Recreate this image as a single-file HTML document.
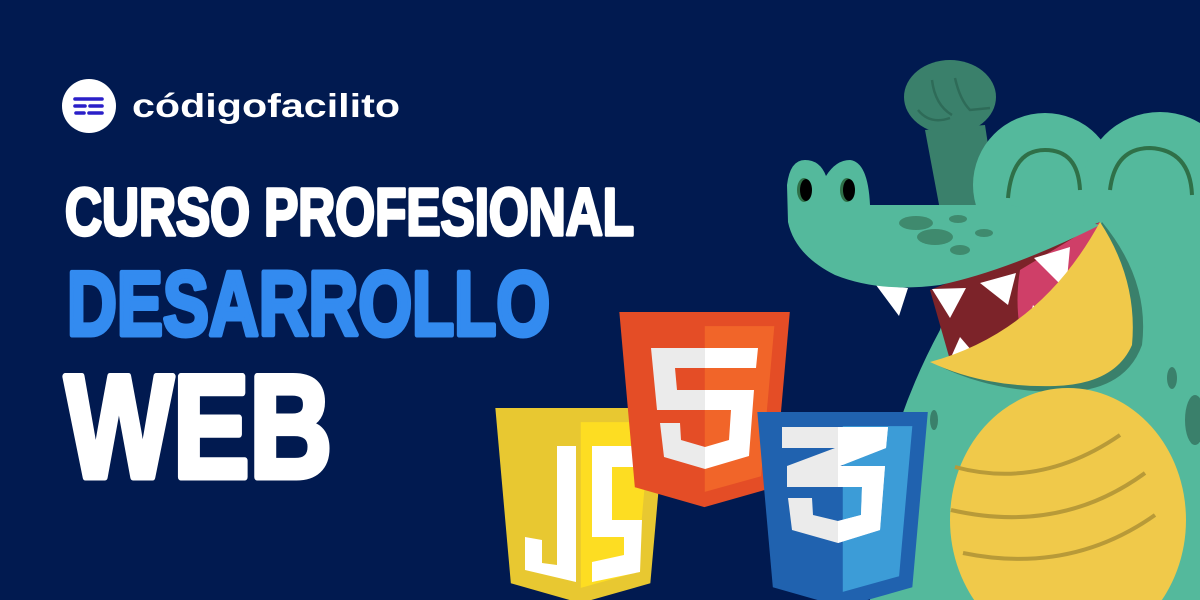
<!DOCTYPE html>
<html><head><meta charset="utf-8"><style>
html,body{margin:0;padding:0;background:#001a4f;overflow:hidden;width:1200px;height:600px}
svg{display:block}
</style></head><body>
<svg width="1200" height="600" viewBox="0 0 1200 600" xmlns="http://www.w3.org/2000/svg">
<defs>
<clipPath id="r3"><rect x="838" y="400" width="100" height="200"/></clipPath>
</defs>
<rect width="1200" height="600" fill="#011a50"/>
<!-- logo -->
<circle cx="89" cy="106" r="27" fill="#fff"/>
<g stroke="#2a1fc8" stroke-width="3.6" stroke-linecap="round">
<line x1="75" y1="99" x2="102" y2="99"/>
<line x1="75" y1="106" x2="85" y2="106"/><line x1="90" y1="106" x2="102" y2="106"/>
<line x1="76" y1="113" x2="84" y2="113"/><line x1="89" y1="113" x2="102" y2="113"/>
</g>
<text x="132" y="117" font-family="Liberation Sans, sans-serif" font-weight="bold" font-size="33" fill="#fff" textLength="268" lengthAdjust="spacingAndGlyphs">códigofacilito</text>
<!-- headings -->
<text x="65" y="235" font-family="Liberation Sans, sans-serif" font-weight="bold" font-size="67" fill="#fff" stroke="#fff" stroke-width="3.5" stroke-linejoin="round" textLength="569" lengthAdjust="spacingAndGlyphs">CURSO PROFESIONAL</text>
<text x="67" y="335" font-family="Liberation Sans, sans-serif" font-weight="bold" font-size="91" fill="#338bf0" stroke="#338bf0" stroke-width="5" stroke-linejoin="round" textLength="483" lengthAdjust="spacingAndGlyphs">DESARROLLO</text>
<text x="65" y="477" font-family="Liberation Sans, sans-serif" font-weight="bold" font-size="146" fill="#fff" stroke="#fff" stroke-width="7" stroke-linejoin="round" textLength="267" lengthAdjust="spacingAndGlyphs">WEB</text>

<!-- croc arm -->
<path d="M925,130 L985,125 L998,210 L940,210 Z" fill="#3a806b"/>
<ellipse cx="950" cy="97" rx="46" ry="37" fill="#3a806b"/>
<g fill="none" stroke="#2e6b58" stroke-width="2.5">
<path d="M918,110 Q930,125 950,118"/><path d="M932,80 Q935,105 952,115"/><path d="M955,78 Q960,100 970,110 L990,108"/>
</g>
<!-- body -->
<path d="M990,160 L1200,150 L1200,600 L870,600 Q870,460 940,330 Z" fill="#54b99c"/>
<circle cx="1045" cy="185" r="72" fill="#54b99c"/>
<circle cx="1160" cy="190" r="78" fill="#54b99c"/>
<ellipse cx="934" cy="420" rx="4" ry="10" fill="#3a806b"/>
<ellipse cx="1172" cy="378" rx="5" ry="11" fill="#3a806b"/>
<ellipse cx="1195" cy="420" rx="10" ry="25" fill="#3a806b"/>
<!-- eye arcs -->
<g fill="none" stroke="#2f7048" stroke-width="4">
<path d="M1008,198 Q1012,150 1045,150 Q1078,150 1080,190"/>
<path d="M1110,190 Q1115,148 1150,148 Q1190,150 1192,195"/>
</g>
<!-- mouth interior -->
<path d="M930,290 L1100,222 L1050,320 L985,355 L950,360 Z" fill="#7c2329"/>
<path d="M1020,270 L1100,222 L1060,310 L1020,330 Q1015,300 1020,270 Z" fill="#cf3f68"/>
<!-- teeth -->
<g fill="#fff">
<path d="M876,285 L908,288 L899,316 Z"/>
<path d="M932,289 L966,288 L950,318 Z"/>
<path d="M980,283 L1016,273 L1008,305 Z"/>
<path d="M1034,258 L1070,247 L1066,290 Z"/>
<path d="M948,364 L960,337 L978,358 Z"/>
<path d="M1024,340 L1033,305 L1050,325 Z"/>
</g>
<!-- snout -->
<path d="M870,205 L1010,205 L1100,225 Q1010,270 940,285 Q880,293 835,275 Q795,255 788,222 L787,185 Q790,160 805,160 Q820,160 826,176 Q836,160 850,160 Q868,162 870,205 Z" fill="#54b99c"/>
<ellipse cx="804" cy="190" rx="7" ry="12" fill="#2f7048"/>
<ellipse cx="806" cy="190" rx="6" ry="11" fill="#000"/>
<ellipse cx="847" cy="190" rx="7" ry="12" fill="#2f7048"/>
<ellipse cx="849" cy="190" rx="6" ry="11" fill="#000"/>
<g fill="#3f8a6e">
<ellipse cx="916" cy="223" rx="17" ry="7"/><ellipse cx="935" cy="237" rx="18" ry="8"/>
<ellipse cx="960" cy="250" rx="10" ry="5"/><ellipse cx="958" cy="219" rx="9" ry="4"/><ellipse cx="984" cy="233" rx="9" ry="4"/>
</g>
<!-- lower jaw -->
<path d="M935,364 Q1045,335 1102,222 Q1150,280 1142,345 Q1125,392 1060,392 Q990,392 935,364 Z" fill="#3a806b"/>
<path d="M930,362 Q1040,332 1100,222 Q1138,280 1132,345 Q1115,384 1055,386 Q985,388 930,362 Z" fill="#f0c94a"/>
<!-- belly -->
<ellipse cx="1068" cy="520" rx="118" ry="132" fill="#f0c94a"/>
<g fill="none" stroke="#b89a38" stroke-width="4">
<path d="M955,467 Q1040,490 1120,435"/>
<path d="M951,510 Q1060,535 1145,473"/>
<path d="M963,553 Q1070,575 1155,515"/>
</g>

<!-- JS shield -->
<g transform="translate(484,408) scale(0.378,0.381)">
<path d="M71,460 L30,0 481,0 440,460 255,512 Z" fill="#e8c831"/>
<path d="M256,472 L405,431 440,37 256,37 Z" fill="#fddd22"/>
</g>
<path d="M557,446 L576,446 L576,582 L525,570 L525,537 L542,540 L542,563 L557,565 Z" fill="#fff"/>
<path d="M592,446 L642,446 L642,467 L612,467 L612,520 L642,520 L640,572 L592,582 L592,562 L624,555 L624,537 L592,537 Z" fill="#fff"/>

<!-- HTML5 shield -->
<g transform="translate(608,312) scale(0.378,0.381)">
<path d="M71,460 L30,0 481,0 440,460 255,512 Z" fill="#e44d26"/>
<path d="M256,472 L405,431 440,37 256,37 Z" fill="#f16529"/>
</g>
<path d="M651,348 L705,348 L705,368 L675,368 L677,390 L705,390 L705,410 L657,410 Z M660,423 L680,423 L681,440 L705,447 L705,469 L664,457 Z" fill="#ebebeb"/>
<path d="M705,348 L758,348 L756,368 L705,368 Z M705,390 L754,390 L749,456 L705,469 L705,447 L729,440 L731,410 L705,410 Z" fill="#fff"/>

<!-- CSS3 shield -->
<g transform="translate(746,412) scale(0.378,0.381)">
<path d="M71,460 L30,0 481,0 440,460 255,512 Z" fill="#2062af"/>
<path d="M256,472 L405,431 440,37 256,37 Z" fill="#3c9cd7"/>
</g>
<path id="three" d="M782,427 L888,427 L886,448 L840,466 L885,466 L880,530 L838,543 L792,530 L788,498 L812,498 L813,515 L838,521 L861,515 L862,487 L787,487 L787,466 L835,448 L782,448 Z" fill="#ebebeb"/>
<g clip-path="url(#r3)"><path d="M782,427 L888,427 L886,448 L840,466 L885,466 L880,530 L838,543 L792,530 L788,498 L812,498 L813,515 L838,521 L861,515 L862,487 L787,487 L787,466 L835,448 L782,448 Z" fill="#fff"/></g>
</svg>
</body></html>
